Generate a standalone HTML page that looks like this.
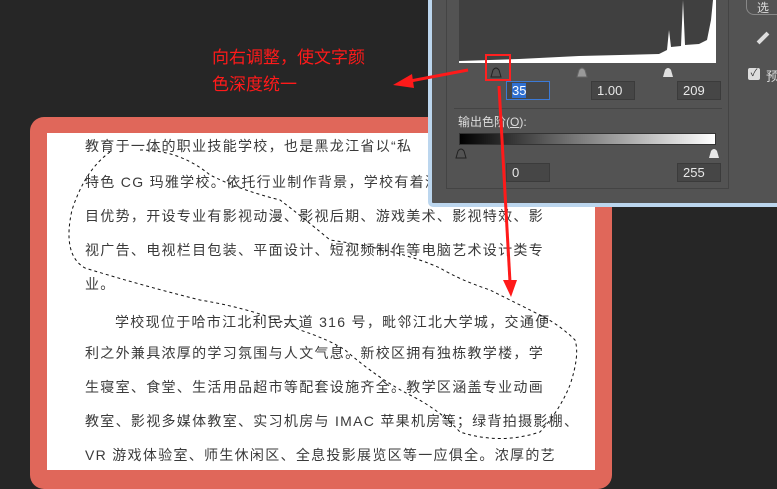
<!DOCTYPE html>
<html><head><meta charset="utf-8"><style>
*{margin:0;padding:0;box-sizing:border-box}
body{width:777px;height:486px;overflow:hidden;background:#262626;position:relative;font-family:"Liberation Sans","Noto Sans CJK SC",sans-serif}
.abs{position:absolute}
.frame{left:30px;top:117px;width:582px;height:372px;background:#e0675a;border-radius:14px}
.doc{left:47px;top:133px;width:548px;height:337px;background:#fff}
.doc p{position:absolute;left:38px;font-size:14px;color:#3a3a3a;white-space:nowrap;letter-spacing:1.3px;font-family:"Liberation Sans","WenQuanYi Zen Hei",sans-serif}
.dlg{left:428px;top:-10px;width:360px;height:217px;border:4px solid #bcd6ee;border-radius:5px;background:#535353}
.fld{position:absolute;height:19px;width:44px;background:#464646;border:1px solid #3b3b3b;color:#e8e8e8;font-size:13px;padding-left:5px;line-height:17px}
.note{left:212px;top:44px;color:#ff1a1a;font-size:17px;line-height:27px;font-family:"WenQuanYi Zen Hei",sans-serif}
</style></head><body>
<div class="abs frame"></div>
<div class="abs doc">
<p style="top:3px">教育于一体的职业技能学校，也是黑龙江省以“私</p>
<p style="top:39px">特色 CG 玛雅学校。依托行业制作背景，学校有着深</p>
<p style="top:73px">目优势，开设专业有影视动漫、影视后期、游戏美术、影视特效、影</p>
<p style="top:107px">视广告、电视栏目包装、平面设计、短视频制作等电脑艺术设计类专</p>
<p style="top:141px">业。</p>
<p style="top:179px;left:68px">学校现位于哈市江北利民大道 316 号，毗邻江北大学城，交通便</p>
<p style="top:210px">利之外兼具浓厚的学习氛围与人文气息。新校区拥有独栋教学楼，学</p>
<p style="top:244px">生寝室、食堂、生活用品超市等配套设施齐全。教学区涵盖专业动画</p>
<p style="top:278px">教室、影视多媒体教室、实习机房与 IMAC 苹果机房等；绿背拍摄影棚、</p>
<p style="top:312px">VR 游戏体验室、师生休闲区、全息投影展览区等一应俱全。浓厚的艺</p>
</div>
<div class="abs dlg"></div>
<div class="abs" style="left:446px;top:0;width:283px;height:189px;border:1px solid #444;border-top:none"></div>
<div class="abs" style="left:459px;top:0;width:257px;height:63px;background:#404040"></div>
<svg class="abs" style="left:459px;top:0" width="257" height="63"><path d="M0 63 L0 61 L60 59 L120 56 L200 54 L208 50 L210 30 L212 47 L222 46 L224 0 L226 45 L240 44 L248 40 L252 20 L254 0 L257 0 L257 63Z" fill="#fff"/></svg>
<svg class="abs" style="left:488px;top:64px" width="240" height="16"><path d="M3 13 L5 6 Q8 2 11 6 L13 13Z" fill="none" stroke="#222"/><path d="M89 13 L91 6 Q94 2 97 6 L99 13Z" fill="#999" stroke="#666"/><path d="M175 13 L177 6 Q180 2 183 6 L185 13Z" fill="#e0e0e0"/></svg>
<div class="fld" style="left:506px;top:81px;border-color:#3c7ad6;color:#fff"><span style="background:#2f6fd1">35</span></div>
<div class="fld" style="left:591px;top:81px">1.00</div>
<div class="fld" style="left:677px;top:81px">209</div>
<div class="abs" style="left:454px;top:108px;width:268px;height:1px;background:#444"></div>
<div class="abs" style="left:458px;top:113px;color:#ddd;font-size:12px">输出色阶(<u>O</u>):</div>
<div class="abs" style="left:459px;top:133px;width:257px;height:12px;background:linear-gradient(90deg,#000,#777 45%,#fff);border:1px solid #333"></div>
<svg class="abs" style="left:454px;top:146px" width="270" height="14"><path d="M2 12 L4 5 Q7 1 10 5 L12 12Z" fill="none" stroke="#222"/><path d="M255 12 L257 5 Q260 1 263 5 L265 12Z" fill="#e8e8e8"/></svg>
<div class="fld" style="left:506px;top:163px">0</div>
<div class="fld" style="left:677px;top:163px">255</div>
<div class="abs" style="left:746px;top:-10px;width:40px;height:25px;border:1px solid #888;border-radius:8px;color:#ddd;font-size:12px;padding:8px 0 0 10px">选</div>
<div class="abs" style="left:756px;top:36px;width:14px;height:4px;background:#ddd;transform:rotate(-45deg)"></div>
<div class="abs" style="left:748px;top:68px;width:12px;height:12px;background:#ddd;border-radius:2px;color:#333;font-size:10px;line-height:12px;text-align:center">✓</div>
<div class="abs" style="left:766px;top:66px;color:#ddd;font-size:13px">预</div>
<svg class="abs" style="left:0;top:0" width="777" height="486">
<path d="M110 152 Q85 170 72 210 Q62 255 85 268 Q140 285 200 300 Q260 310 300 330 Q330 340 345 350 Q380 380 410 395 Q440 410 460 432 Q500 445 540 432 Q560 410 570 385 Q580 355 575 340 Q560 325 540 315 Q510 300 490 290 Q460 280 440 268 Q400 250 330 240 Q300 215 280 200 Q240 190 210 175 Q180 150 140 150" fill="none" stroke="#111" stroke-width="1" stroke-dasharray="3 3"/>
<rect x="486" y="55" width="24" height="25" fill="none" stroke="#ff2020" stroke-width="2"/>
<path d="M468 70 L405 82" stroke="#ff1a1a" stroke-width="3"/>
<path d="M393 85 L412 74 L414 88Z" fill="#ff1a1a"/>
<path d="M499 86 L510 282" stroke="#ff1a1a" stroke-width="3"/>
<path d="M503 280 L517 280 L511 297Z" fill="#ff1a1a"/>
</svg>
<div class="abs note">向右调整，使文字颜<br>色深度统一</div>
</body></html>
